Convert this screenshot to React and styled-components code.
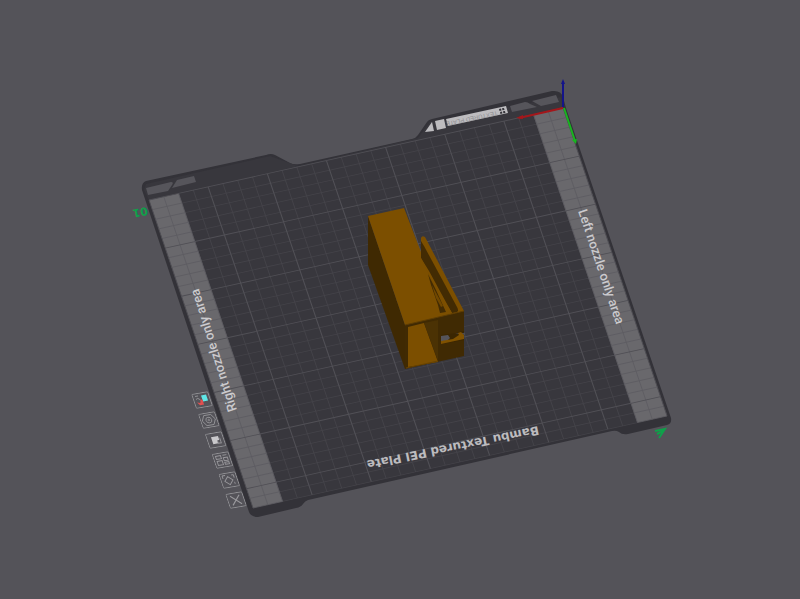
import React from 'react';
import styled, { createGlobalStyle } from 'styled-components';

const GlobalStyle = createGlobalStyle`
  body {
    margin: 0;
    background-color: #545359;
  }
`;

const Viewport = styled.main`
  display: flex;
  height: 100vh;
  overflow: hidden;
  background-color: #545359;
`;

const Scene = styled.svg`
  flex: 1;
  min-width: 0;
  height: 100%;
`;

const NozzleLabel = styled.text`
  font-family: Roboto, sans-serif;
  font-size: 13px;
  font-weight: 500;
  fill: #cbcacd;
`;

const PlateName = styled.text`
  font-family: 'DejaVu Sans', sans-serif;
  font-size: 12px;
  font-weight: 700;
  fill: #bcbbbe;
`;

const PlateNumber = styled.text`
  font-family: 'DejaVu Sans', sans-serif;
  font-size: 11px;
  font-weight: 700;
  fill: #0fa04a;
`;

const BannerText = styled.text`
  font-family: 'Liberation Sans', sans-serif;
  font-size: 6px;
  fill: #8f8e91;
`;

const PlateTools = styled.div`
  display: flex;
  flex-direction: column;
  gap: 5px;
`;

const ToolButton = styled.button`
  display: block;
  width: 17px;
  height: 15px;
  padding: 0;
  border: 0;
  background: none;
  cursor: pointer;

  svg {
    display: block;
    width: 17px;
    height: 15px;
    fill: none;
    stroke: #99989c;
  }
`;

// Bed size in millimetres
const BED_WIDTH = 350;
const BED_DEPTH = 320;
const STRIP = 25;

const bedMatrix = 'matrix(1.183 -0.263 0.325 0.9625 149 200)';

const gridPath = (from, to, major) => {
  let d = '';
  for (let x = from; x <= to; x += 12.5) {
    if ((x % 50 === 0) === major) d += `M${x} 0V${BED_DEPTH}`;
  }
  for (let y = 0; y <= BED_DEPTH; y += 10) {
    if ((y % 50 === 0) === major) d += `M${from} ${y}H${to}`;
  }
  return d;
};

const tools = [
  {
    name: 'Nozzle mapping',
    icon: (
      <>
        <path d="M3 3h3M3 6q2-2 4 1" strokeWidth="0.8" />
        <path d="M9 3h5v6h-5z" fill="#5fe6e6" stroke="none" />
        <path d="M3 9l3 1 1-3 2 0v5h-4z" fill="#e05050" stroke="none" />
      </>
    ),
  },
  {
    name: 'Plate settings',
    icon: (
      <>
        <path d="M5 2.500h7l3 5-3 5h-7l-3-5z" strokeWidth="0.8" />
        <circle cx="8.5" cy="7.5" r="2.8" strokeWidth="0.8" />
        <circle cx="8.5" cy="7.5" r="0.8" strokeWidth="0.7" />
      </>
    ),
  },
  {
    name: 'Lock plate',
    icon: (
      <>
        <path d="M5 4h7v4h-2v3h-5z" fill="#c9c8cb" stroke="none" />
        <path d="M10 8v3h3v-5" strokeWidth="0.9" />
      </>
    ),
  },
  {
    name: 'Arrange objects',
    icon: (
      <path d="M3 3h5v3h-5zM3 8h5v4h-5zM10 3h4M10 5.500h4v3h-4zM10 12h4v-2h-4z" strokeWidth="0.9" />
    ),
  },
  {
    name: 'Orient objects',
    icon: <path d="M8 4l4 4-4 4-4-4zM3 2.500v3M3 2.500h3M14 3v3M12 3h2M13 10v2" strokeWidth="0.9" />,
  },
  {
    name: 'Remove plate',
    icon: <path d="M4 3l9 9M13 3l-9 9" strokeWidth="1.1" />,
  },
];

const Plate = () => (
  <g>
    <path
      d="M142 190Q141 183 146 181L266 155Q271 153 275 155L290 163Q293 165 300 164L412 139Q416 138 418 135L427 122Q428 120 432 119L552 91Q561 90 563 97L566 108L671 418Q672 424 667 425L628 434Q622 435 619 432Q616 430 612 431L308 500Q305 501 303 504Q301 507 296 508L258 517Q251 517 249 512Z"
      fill="#333238"
    />
    <path d="M144 190L149 200L253 508L667 416L563 108L561 97L430 122L418 138L298 166L270 156L146 184Z" fill="#38373d" />
    <g fill="#56555b">
      <path d="M146 188L171 182Q174 182 172 185L168 191L148 195Z" />
      <path d="M177 180L194 176L196 182L172 188Z" />
      <path d="M510 106L525 102Q528 102 530 104L537 107L512 112Z" />
      <path d="M532 101L556 95L559 102L541 106Z" />
    </g>

    <g transform={bedMatrix} fill="none">
      <path d={`M0 0H${BED_WIDTH}V${BED_DEPTH}H0Z`} fill="#38373d" />
      <path d={gridPath(STRIP, BED_WIDTH - STRIP, false)} stroke="#444349" strokeWidth="0.8" />
      <path d={gridPath(STRIP, BED_WIDTH - STRIP, true)} stroke="#515056" strokeWidth="0.9" />
      {[0, BED_WIDTH - STRIP].map((x) => (
        <g key={x}>
          <rect x={x} width={STRIP} height={BED_DEPTH} fill="#69686c" />
          <path d={gridPath(x, x + STRIP, false)} stroke="#5d5c61" strokeWidth="0.7" />
          <path d={gridPath(x, x + STRIP, true)} stroke="#4f4e54" strokeWidth="0.8" />
        </g>
      ))}
    </g>

    <g fill="#bdbcbf">
      <path d="M432 122L434 131L425 132Z" />
      <path d="M435 121L444 119L446 128L437 130Z" />
      <path d="M446 119L506 106L508 113L448 126Z" />
    </g>
    <path d="M499 109l2-.4.5 2-2 .4zM502 108.300l2-.4.5 2-2 .4zM500 112l2-.4.4 2-2 .4zM503 111.300l2-.4.4 2-2 .4z" fill="#333238" />
    <BannerText transform="translate(497 111) rotate(167.700)">TEXTURED PLATE</BannerText>

    <NozzleLabel transform="translate(237 410) rotate(-107.500)">Right nozzle only area</NozzleLabel>
    <NozzleLabel transform="translate(578 211) rotate(71.500)">Left nozzle only area</NozzleLabel>
    <PlateName transform="translate(538 426) rotate(168.500)">Bambu Textured PEI Plate</PlateName>
    <PlateNumber transform="translate(147 207) rotate(169)">01</PlateNumber>
    <path d="M655 431L665 429L659 438M657 434L663 431" fill="none" stroke="#0fa04a" strokeWidth="2" />
  </g>
);

const Axes = () => (
  <g fill="none" strokeWidth="2">
    <path d="M563 108L519 118" stroke="#a3171b" />
    <path d="M523 115L516 118L523 119Z" fill="#a3171b" stroke="none" />
    <path d="M564 108L575 141" stroke="#18b51f" />
    <path d="M572 140L576 144L577 139Z" fill="#18b51f" stroke="none" />
    <path d="M563 107V83" stroke="#14148a" />
    <path d="M561 84L563 79L565 84Z" fill="#14148a" stroke="none" />
  </g>
);

const Model = () => (
  <g>
    <path d="M368 216L405 325L405 369L368 265Z" fill="#3f2902" />
    <path d="M405 325L464 311V356L405 369Z" fill="#402a03" />
    <path d="M368 216L404 208L421 252L421 238Q422 235 425 237L464 311L405 325Z" fill="#7c4f00" />
    <path d="M421 241L421 258L429 274L438 290L452 313L457 312Q459 311 457 307L450 294L424 246Z" fill="#422b03" />
    <path d="M421 258L429 271L447 304L452 313L449 314L429 275L421 260Z" fill="#7c4f00" />
    <path d="M428 274L436 290L446 312L440 313L438 305L431 285Z" fill="#422b03" />
    <path d="M432 285L440 300L443 306L441 307L436 298Z" fill="#714800" />
    <path d="M408 327L424 323L438 362L408 367Z" fill="#7c4f00" />
    <path d="M424 323L438 320V361Z" fill="#4b3204" />
    <path d="M405 325L464 311" stroke="#5f3d02" fill="none" />
    <path d="M406 368L438 361" stroke="#664202" fill="none" />
    <path d="M441 335L456 333L464 331V340L441 344Z" fill="#3a2602" />
    <path d="M455 333H465V335Z" fill="#4b4a50" />
    <path d="M441 336L448 335L450 338L447 341L441 341Z" fill="#55545a" />
    <path d="M458 333L461 332L464 335V339L441 344V341L453 339L459 335Z" fill="#805200" />
  </g>
);

const App = () => {
  return (
    <>
      <GlobalStyle />
      <Viewport>
        <Scene viewBox="0 0 800 599" aria-label="Build plate">
          <Plate />
          <Axes />
          <Model />
          <foreignObject width="17" height="120" transform="matrix(1 -0.170 0.340 1 191 394)">
            <PlateTools>
              {tools.map((tool) => (
                <ToolButton key={tool.name} type="button" aria-label={tool.name}>
                  <svg viewBox="0 0 17 15">
                    <rect x="0.5" y="0.5" width="16" height="14" rx="1" strokeWidth="0.8" />
                    {tool.icon}
                  </svg>
                </ToolButton>
              ))}
            </PlateTools>
          </foreignObject>
        </Scene>
      </Viewport>
    </>
  );
};

export default App;
